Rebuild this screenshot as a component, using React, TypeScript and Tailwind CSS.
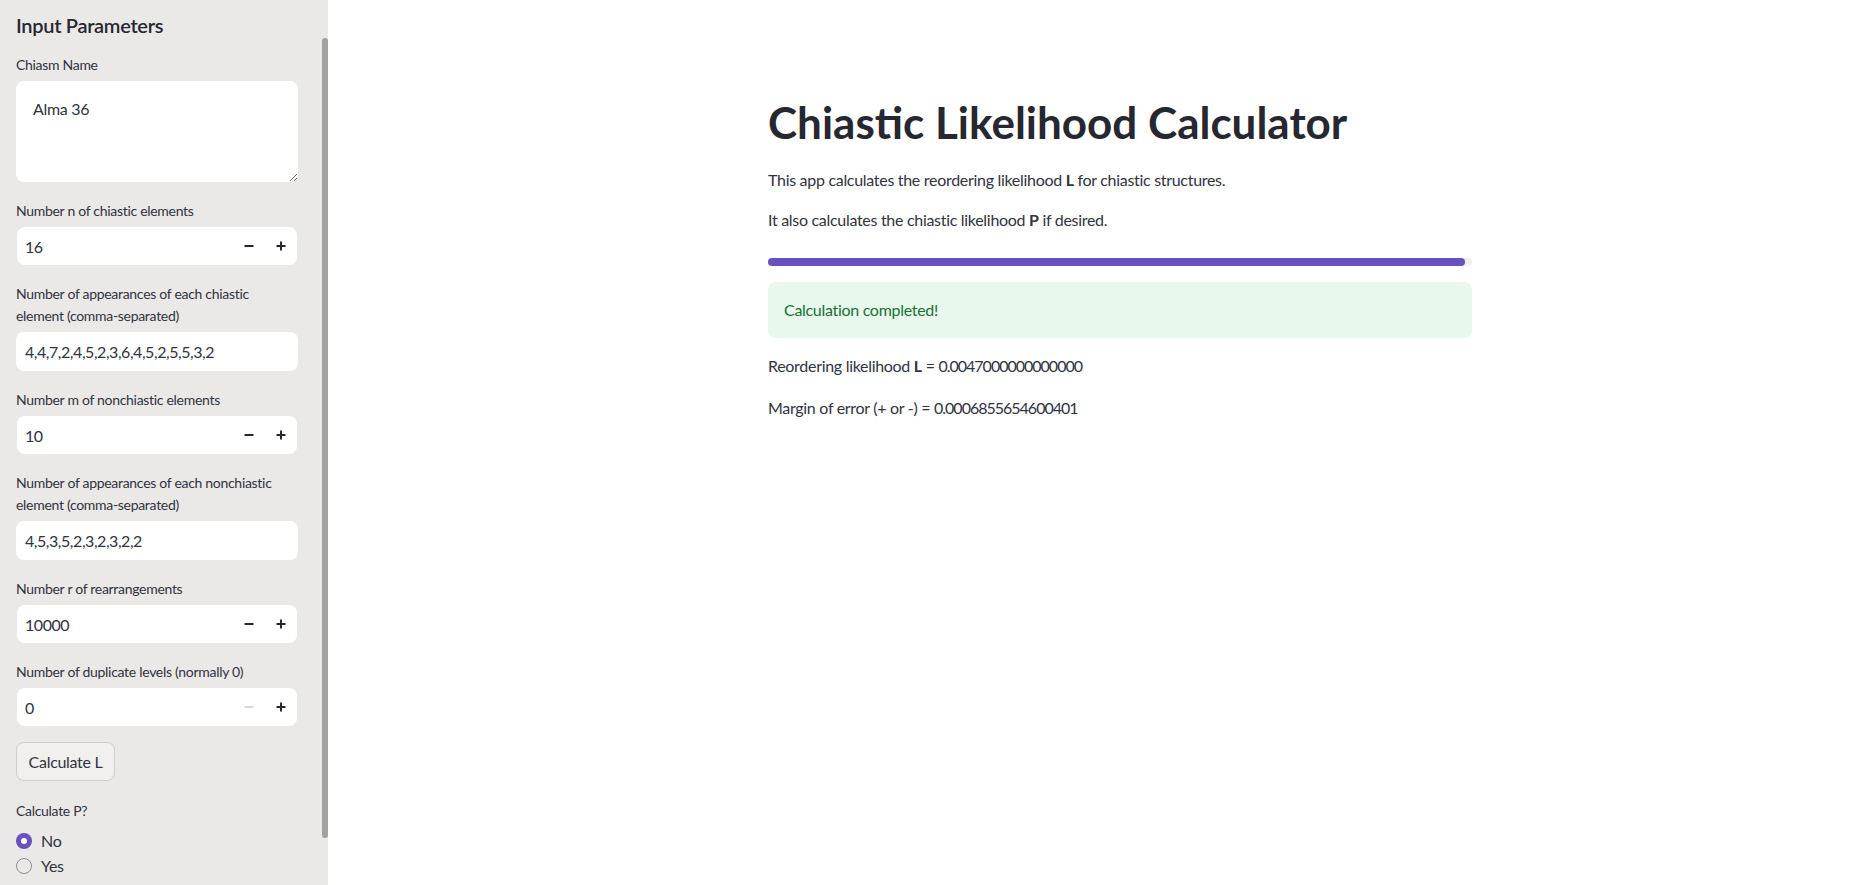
import React from 'react';

const FONT = "font-['Lato','Liberation_Sans',sans-serif] tracking-[-0.3px]";

function Label({ children }: { children: React.ReactNode }) {
  return <div className="text-sm leading-[22px] text-[#31333f] mb-[5px]">{children}</div>;
}

function Stepper({ value, minusDisabled }: { value: string; minusDisabled?: boolean }) {
  return (
    <div className="flex items-center h-[38px] ml-px mr-px bg-white rounded-lg">
      <input
        readOnly
        value={value}
        className="flex-1 min-w-0 h-full pl-2 bg-transparent text-base tracking-[-0.45px] text-[#31333f] outline-none"
      />
      <button className={`w-8 h-full flex items-center justify-center ${minusDisabled ? 'text-[#d5d7de]' : 'text-[#262730]'}`}>
        <svg width="10" height="10" viewBox="0 0 10 10">
          <path d="M0.5 5h9" stroke="currentColor" strokeWidth="2" />
        </svg>
      </button>
      <button className="w-8 h-full flex items-center justify-center text-[#262730]">
        <svg width="10" height="10" viewBox="0 0 10 10">
          <path d="M0.5 5h9M5 0.5v9" stroke="currentColor" strokeWidth="2" />
        </svg>
      </button>
    </div>
  );
}

function TextBox({ value }: { value: string }) {
  return (
    <input
      readOnly
      value={value}
      className="w-full h-[39px] px-[9px] bg-white rounded-lg text-base tracking-[-0.45px] text-[#31333f] outline-none"
    />
  );
}

function Radio({ label, checked }: { label: string; checked?: boolean }) {
  return (
    <div className="flex items-center h-[25px] gap-[9px]">
      {checked ? (
        <span className="w-4 h-4 rounded-full bg-[#6750c0] flex items-center justify-center">
          <span className="w-[6px] h-[6px] rounded-full bg-white" />
        </span>
      ) : (
        <span className="w-4 h-4 rounded-full border border-[#8e8e8e]" />
      )}
      <span className="text-base text-[#31333f]">{label}</span>
    </div>
  );
}

export default function App() {
  return (
    <div className={`flex h-[885px] overflow-hidden bg-white ${FONT}`}>
      {/* Sidebar */}
      <aside className="relative w-[328px] shrink-0 bg-[#ebe9e7] pl-4 pr-[30px]">
        <h2 className="mt-[11px] text-xl leading-7 font-semibold text-[#262730]">Input Parameters</h2>

        <div className="mt-[15px]">
          <Label>Chiasm Name</Label>
          <textarea
            readOnly
            defaultValue="Alma 36"
            className="block w-full h-[101px] pl-[17px] pr-4 pt-4 bg-white rounded-lg text-base leading-6 text-[#31333f] outline-none"
          />
        </div>

        <div className="mt-[18px]">
          <Label>Number n of chiastic elements</Label>
          <Stepper value="16" />
        </div>

        <div className="mt-[18px]">
          <Label>
            Number of appearances of each chiastic
            <br />
            element (comma-separated)
          </Label>
          <TextBox value="4,4,7,2,4,5,2,3,6,4,5,2,5,5,3,2" />
        </div>

        <div className="mt-[18px]">
          <Label>Number m of nonchiastic elements</Label>
          <Stepper value="10" />
        </div>

        <div className="mt-[18px]">
          <Label>
            Number of appearances of each nonchiastic
            <br />
            element (comma-separated)
          </Label>
          <TextBox value="4,5,3,5,2,3,2,3,2,2" />
        </div>

        <div className="mt-[18px]">
          <Label>Number r of rearrangements</Label>
          <Stepper value="10000" />
        </div>

        <div className="mt-[18px]">
          <Label>Number of duplicate levels (normally 0)</Label>
          <Stepper value="0" minusDisabled />
        </div>

        <button className="mt-4 h-[39px] w-[99px] rounded-lg border border-[#d0cecd] bg-[#f2f0ef] text-base text-[#31333f]">
          Calculate L
        </button>

        <div className="mt-[19px] text-sm leading-[22px] text-[#31333f]">Calculate P?</div>
        <div className="mt-[6px] flex flex-col">
          <Radio label="No" checked />
          <Radio label="Yes" />
        </div>

        {/* scrollbar thumb */}
        <div className="absolute right-0 top-[38px] w-[6px] h-[800px] rounded-full bg-[#a3a2a1]" />
      </aside>

      {/* Main */}
      <main className="flex-1 pl-[440px]">
        <div className="w-[704px]">
          <h1 className="mt-[96px] text-[44px] leading-[1.2] font-bold tracking-normal text-[#262730]">
            Chiastic Likelihood Calculator
          </h1>
          <p className="mt-[18px] text-base leading-[26px] text-[#31333f]">
            This app calculates the reordering likelihood <b>L</b> for chiastic structures.
          </p>
          <p className="mt-[14px] text-base leading-[26px] text-[#31333f]">
            It also calculates the chiastic likelihood <b>P</b> if desired.
          </p>

          <div className="mt-[25px] h-2 rounded-full bg-[#efefef]">
            <div className="h-2 w-[99%] rounded-full bg-[#6750c0]" />
          </div>

          <div className="mt-4 h-[56px] px-4 flex items-center rounded-lg bg-[#e8f8ed] text-base text-[#177233]">
            Calculation completed!
          </div>

          <p className="mt-[15px] text-base leading-[26px] text-[#31333f]">
            Reordering likelihood <b>L</b> = <span className="tracking-[-1px]">0.0047000000000000</span>
          </p>
          <p className="mt-4 text-base leading-[26px] text-[#31333f]">
            Margin of error (+ or -) = <span className="tracking-[-1px]">0.0006855654600401</span>
          </p>
        </div>
      </main>
    </div>
  );
}
